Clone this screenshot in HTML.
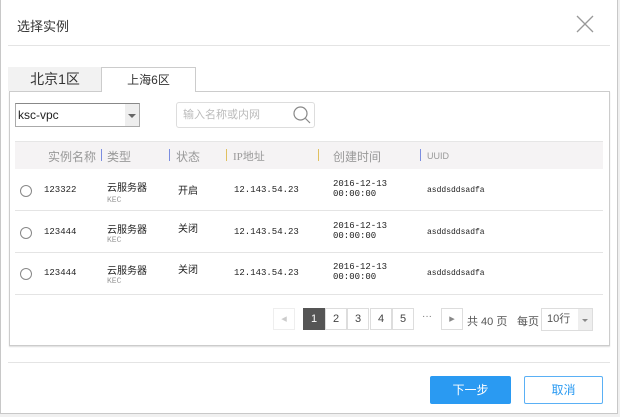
<!DOCTYPE html>
<html><head><meta charset="utf-8"><style>
*{margin:0;padding:0;box-sizing:border-box}
body{width:620px;height:417px;background:#f0f0f0;font-family:"Liberation Sans","Noto Sans CJK SC",sans-serif;position:relative;overflow:hidden}
.dlg{position:absolute;left:0;top:0;width:618px;height:414px;background:#fff;box-shadow:inset 1px 0 0 #c8c8c8,inset -1px 0 0 #c8c8c8,inset 0 -1px 0 #c8c8c8}
.a{position:absolute}
.t{font-size:13px;color:#333}
.line{position:absolute;height:1px;background:#e4e4e4}
.th{position:absolute;top:148px;font-size:12px;color:#999}
.bar{position:absolute;top:149px;width:1px;height:12px;background:#7b8de0}
.c{position:absolute;font-size:9px;color:#222;font-family:"Liberation Mono","Noto Sans CJK SC",monospace}
.r{position:absolute;left:20px;width:12px;height:12px;border:1px solid #888;border-radius:50%}
.pg{position:absolute;top:308px;width:22px;height:22px;border:1px solid #ddd;font-size:11px;color:#444;text-align:center;line-height:20px}
</style></head><body>
<div class="dlg">
<div class="a t" style="left:17px;top:16px;font-size:13px">选择实例</div>
<svg class="a" style="left:575px;top:14px" width="20" height="20"><path d="M2 2L18 18M18 2L2 18" stroke="#999" stroke-width="1.3"/></svg>
<div class="line" style="left:8px;top:45px;width:602px"></div>
<div class="a" style="left:8px;top:67px;width:94px;height:24px;background:#f2f2f2;font-size:14px;color:#333;text-align:center;line-height:24px">北京1区</div>
<div class="a" style="left:101px;top:67px;width:95px;height:25px;background:#fff;border:1px solid #ccc;border-bottom:none;font-size:12px;color:#333;text-align:center;line-height:24px;z-index:2">上海6区</div>
<div class="a" style="left:9px;top:91px;width:601px;height:255px;border:1px solid #ccc;box-shadow:0 1px 1px #ddd"></div>
<div class="a" style="left:15px;top:103px;width:125px;height:24px;border:1px solid #aaa;border-top-color:#888;font-size:12px;line-height:22px;padding-left:2px;color:#222">ksc-vpc<div class="a" style="right:0;top:0;width:14px;height:22px;background:#eee"></div><div class="a" style="right:3px;top:10px;border:4px solid transparent;border-top:4px solid #666"></div></div>
<div class="a" style="left:176px;top:102px;width:139px;height:26px;border:1px solid #ddd;border-radius:3px;font-size:11px;color:#bbb;line-height:24px;padding-left:6px">输入名称或内网</div>
<svg class="a" style="left:292px;top:105px" width="20" height="20"><circle cx="8.5" cy="8.5" r="6.5" fill="none" stroke="#888" stroke-width="1.2"/><path d="M13.5 13.5L18 18" stroke="#888" stroke-width="1.2"/></svg>
<div class="a" style="left:15px;top:141px;width:588px;height:28px;background:#f5f3f4;border-top:1px solid #e6e6e6"></div>
<div class="th" style="left:48px">实例名称</div><div class="bar" style="left:101px"></div>
<div class="th" style="left:107px">类型</div><div class="bar" style="left:169px"></div>
<div class="th" style="left:176px">状态</div><div class="bar" style="left:226px;background:#e0c060"></div>
<div class="th" style="left:233px;font-size:11px;font-family:'Liberation Serif',serif">IP地址</div><div class="bar" style="left:318px;background:#e0c060"></div>
<div class="th" style="left:333px">创建时间</div><div class="bar" style="left:420px"></div>
<div class="th" style="left:427px;font-size:9px;top:151px">UUID</div>

<div class="line" style="left:15px;top:210px;width:588px"></div>
<div class="line" style="left:15px;top:252px;width:588px"></div>
<div class="line" style="left:15px;top:294px;width:588px"></div>

<div class="r" style="top:185px"></div>
<div class="c" style="left:44px;top:185px">123322</div>
<div class="c" style="left:107px;top:179px;font-size:10px;font-family:'Noto Sans CJK SC',sans-serif">云服务器</div>
<div class="c" style="left:107px;top:196px;color:#999;font-size:8px">KEC</div>
<div class="c" style="left:178px;top:182px;font-size:10px;font-family:'Noto Sans CJK SC',sans-serif">开启</div>
<div class="c" style="left:234px;top:185px">12.143.54.23</div>
<div class="c" style="left:333px;top:179px">2016-12-13<br>00:00:00</div>
<div class="c" style="left:427px;top:186px;font-size:8px">asddsddsadfa</div>

<div class="r" style="top:227px"></div>
<div class="c" style="left:44px;top:227px">123444</div>
<div class="c" style="left:107px;top:221px;font-size:10px;font-family:'Noto Sans CJK SC',sans-serif">云服务器</div>
<div class="c" style="left:107px;top:236px;color:#999;font-size:8px">KEC</div>
<div class="c" style="left:178px;top:220px;font-size:10px;font-family:'Noto Sans CJK SC',sans-serif">关闭</div>
<div class="c" style="left:234px;top:227px">12.143.54.23</div>
<div class="c" style="left:333px;top:221px">2016-12-13<br>00:00:00</div>
<div class="c" style="left:427px;top:228px;font-size:8px">asddsddsadfa</div>

<div class="r" style="top:268px"></div>
<div class="c" style="left:44px;top:268px">123444</div>
<div class="c" style="left:107px;top:262px;font-size:10px;font-family:'Noto Sans CJK SC',sans-serif">云服务器</div>
<div class="c" style="left:107px;top:277px;color:#999;font-size:8px">KEC</div>
<div class="c" style="left:178px;top:261px;font-size:10px;font-family:'Noto Sans CJK SC',sans-serif">关闭</div>
<div class="c" style="left:234px;top:268px">12.143.54.23</div>
<div class="c" style="left:333px;top:262px">2016-12-13<br>00:00:00</div>
<div class="c" style="left:427px;top:269px;font-size:8px">asddsddsadfa</div>

<div class="pg" style="left:273px;color:#ccc;border-color:#eee">◂</div>
<div class="pg" style="left:303px;background:#555;color:#fff;border-color:#555">1</div>
<div class="pg" style="left:325px">2</div>
<div class="pg" style="left:347px">3</div>
<div class="pg" style="left:370px">4</div>
<div class="pg" style="left:392px">5</div>
<div class="a" style="left:422px;top:311px;font-size:10px;color:#777">···</div>
<div class="pg" style="left:441px;color:#888">▸</div>
<div class="a" style="left:467px;top:313px;font-size:11px;color:#555">共 40 页</div>
<div class="a" style="left:517px;top:313px;font-size:11px;color:#555">每页</div>
<div class="a" style="left:541px;top:308px;width:52px;height:23px;border:1px solid #ddd;font-size:11px;color:#555;line-height:21px;padding-left:5px">10行<div class="a" style="right:0;top:0;width:14px;height:21px;background:#eee"></div><div class="a" style="right:4px;top:10px;border:3px solid transparent;border-top:3px solid #888"></div></div>

<div class="line" style="left:8px;top:362px;width:602px"></div>
<div class="a" style="left:430px;top:376px;width:81px;height:28px;background:#2a9af2;border-radius:2px;color:#fff;font-size:12px;text-align:center;line-height:28px">下一步</div>
<div class="a" style="left:524px;top:376px;width:79px;height:28px;border:1px solid #5ab0f5;border-radius:2px;color:#2a9af2;font-size:12px;text-align:center;line-height:26px">取消</div>
</div>
</body></html>
